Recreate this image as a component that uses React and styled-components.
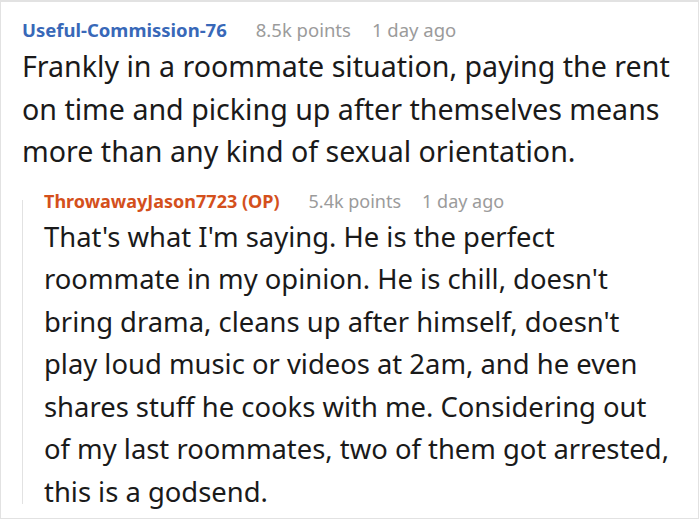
import React from 'react';
import styled, {createGlobalStyle} from "styled-components";

const GlobalStyle = createGlobalStyle`
  body {
    margin: 0;
    background: #fff;
    font-family: "Noto Sans", "Open Sans", sans-serif;
  }
`;

const Card = styled.div`
  box-sizing: border-box;
  width: 699px;
  height: 519px;
  border: 1px solid #e2e2e2;
  border-top-width: 2px;
  padding: 16px 4px 0 21px;
  overflow: hidden;
  background: #fff;
`;

const Meta = styled.div`
  display: flex;
  align-items: center;
  gap: 21px;
  height: 24px;
  font-size: ${p => p.size || 18.5}px;
  line-height: 24px;
  white-space: nowrap;
  margin-bottom: 3px;
`;

const Author = styled.span`
  font-weight: 700;
  color: ${p => p.color};
  margin-right: 8px;
`;

const Muted = styled.span`
  color: #9b9b9b;
`;

const Body = styled.p`
  margin: 0;
  font-size: ${p => p.size}px;
  line-height: 42.5px;
  color: #1a1a1a;
`;

const Reply = styled.div`
  display: flex;
  margin-top: 16px;
`;

const Rail = styled.div`
  flex: 0 0 1px;
  background: #e2e2e2;
  margin: 11px 21px 9px 0;
`;

const ReplyContent = styled.div`
  flex: 1;
  min-width: 0;
  padding-right: 18px;
`;

const comments = {
    parent: {
        author: "Useful-Commission-76",
        points: "8.5k points",
        time: "1 day ago",
        text: "Frankly in a roommate situation, paying the rent on time and picking up after themselves means more than any kind of sexual orientation."
    },
    reply: {
        author: "ThrowawayJason7723 (OP)",
        points: "5.4k points",
        time: "1 day ago",
        text: "That's what I'm saying. He is the perfect roommate in my opinion. He is chill, doesn't bring drama, cleans up after himself, doesn't play loud music or videos at 2am, and he even shares stuff he cooks with me. Considering out of my last roommates, two of them got arrested, this is a godsend."
    }
};

const App = () => {
    const {parent, reply} = comments;
    return (
        <>
            <GlobalStyle/>
            <Card>
                <Meta>
                    <Author color="#3868b8">{parent.author}</Author>
                    <Muted>{parent.points}</Muted>
                    <Muted>{parent.time}</Muted>
                </Meta>
                <Body size={28.6}>{parent.text}</Body>

                <Reply>
                    <Rail/>
                    <ReplyContent>
                        <Meta size={18}>
                            <Author color="#d4501c">{reply.author}</Author>
                            <Muted>{reply.points}</Muted>
                            <Muted>{reply.time}</Muted>
                        </Meta>
                        <Body size={27.4}>{reply.text}</Body>
                    </ReplyContent>
                </Reply>
            </Card>
        </>
    );
};

export default App;
